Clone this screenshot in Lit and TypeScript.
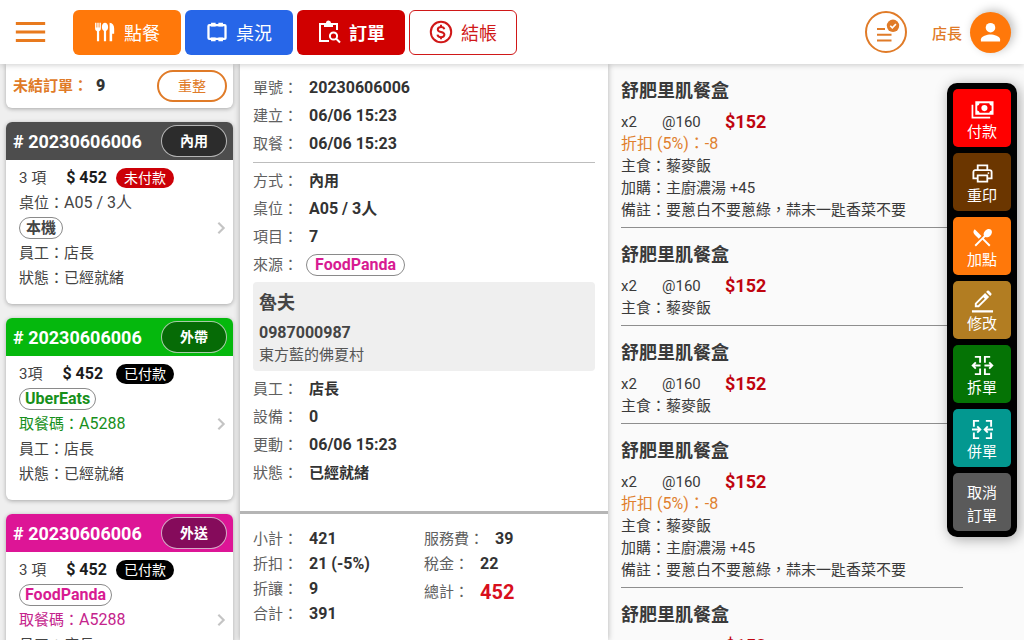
import { LitElement, html, css, svg, nothing } from "lit";
import { customElement, property } from "lit/decorators.js";

const line = (d: string, width = 2) =>
  svg`<path d=${d} fill="none" stroke="currentColor" stroke-width=${width} />`;

const icons: Record<string, unknown> = {
  menu: svg`<path d="M-4 2.700h32M-4 12h32M-4 21.300h32" fill="none" stroke="currentColor" stroke-width="3.300"/>`,
  utensils: svg`<g fill="currentColor"><path d="M1.2 2h1.5v5h.9V2h1.5v5H6V2h1.500v6.200c0 1.600-.8 2.600-1.900 3V22H3.200V11.200C2 10.800 1.200 9.800 1.200 8.200z"/><path d="M12 2c2 0 3.400 1.900 3.400 4.500 0 2.100-.8 3.700-2.200 4.300V22h-2.400V10.800C9.400 10.200 8.600 8.600 8.600 6.500 8.600 3.900 10 2 12 2z"/><path d="M17 2c3.200.2 5 2.600 5 6.500V14h-2.200v8H17z"/></g>`,
  table: svg`<rect x="2.700" y="4.500" width="18.600" height="15" rx="1" fill="none" stroke="currentColor" stroke-width="2.500"/><path d="M5.500 1.800h5V6h-5zM13.500 1.800h5V6h-5zM5.500 18h5v4.200h-5zM13.500 18h5v4.200h-5z" fill="currentColor"/>`,
  clipboard: svg`${line("M8 4H3v17h9M14 4h6v6")}<path d="M7 7V3h2a2.500 2.500 0 0 1 5 0h2v4z" fill="currentColor"/><circle cx="16.500" cy="16" r="3.600" fill="none" stroke="currentColor" stroke-width="2"/>${line("M19 18.500l4 4")}`,
  dollar: svg`<circle cx="12" cy="12" r="10.200" fill="none" stroke="currentColor" stroke-width="2"/>${line("M15.300 9.200C15 7.700 13.800 6.900 12 6.900c-2 0-3.200 1-3.200 2.500 0 3.600 6.600 1.600 6.600 5.200 0 1.600-1.400 2.600-3.400 2.600-2 0-3.300-.9-3.500-2.600M12 4.800v2.500M12 16.800v2.500", 2)}`,
  tasks: svg`${line("M3 9h8M3 14.800h14.500M3 20.600h14.500", 2)}<circle cx="19" cy="5.800" r="6.200" fill="currentColor"/><path d="M16.300 5.800l2 2 3.600-3.700" fill="none" stroke="#fff" stroke-width="1.600"/>`,
  person: svg`<g fill="currentColor"><circle cx="12" cy="7" r="5"/><path d="M2 21.500v-2.500c0-3.300 6.600-5 10-5s10 1.700 10 5v2.500z"/></g>`,
  cash: svg`<path fill="currentColor" fill-rule="evenodd" d="M4.500 3.500h19v14h-19zM9 5.500a3 3 0 0 1-2.500 2.500v5A3 3 0 0 1 9 15.500h10a3 3 0 0 1 2.500-2.500V8A3 3 0 0 1 19 5.500z"/><circle cx="14" cy="10.500" r="3.200" fill="currentColor"/>${line("M1.500 7v13.500H20", 1.800)}`,
  printer: svg`${line("M7 8V3.500h10V8M7 17H2.500v-6.500A2 2 0 0 1 4.500 8.500h15a2 2 0 0 1 2 2V17H17M7 14h10v6.500H7z", 1.900)}<circle cx="18.200" cy="11.600" r="1" fill="currentColor"/>`,
  cutlery: svg`<path fill="currentColor" d="M8.100 13.340l2.830-2.830L3.910 3.500a4.008 4.008 0 0 0 0 5.660l4.190 4.180zm6.780-1.810c1.530.71 3.680.21 5.270-1.380 1.910-1.910 2.280-4.650.81-6.120-1.460-1.460-4.200-1.100-6.120.81-1.590 1.590-2.090 3.740-1.380 5.270L3.700 19.870l1.410 1.410L12 14.410l6.880 6.880 1.410-1.410L13.410 13l1.470-1.470z"/>`,
  pencil: svg`${line("M1 22.300h22", 2.400)}<path fill="currentColor" fill-rule="evenodd" d="M4 18v-4.200L14.700 3.100l4.200 4.200L8.200 18zM6 16h1.400l7-7L13 7.600l-7 7zM15.800 2l1.100-1.100a1.200 1.200 0 0 1 1.700 0L21.100 3.400a1.200 1.200 0 0 1 0 1.700L20 6.200z"/>`,
  split: svg`${line("M4 3h5.500v6M9.500 15v6H4M20 3h-5.500v6M14.500 15v6H20M10 12H2M22 12h-8M5 8.800L1.800 12 5 15.200M19 8.800l3.200 3.200-3.200 3.200")}`,
  merge: svg`${line("M8.500 3H3v6M3 15v6h5.500M15.500 3H21v6M21 15v6h-5.500M1 12h8M23 12h-8M6.500 8.800L9.700 12l-3.200 3.200M17.500 8.800L14.300 12l3.200 3.200")}`,
  chevron: svg`${line("M8 4l8 8L8 20", 3.200)}`,
};

const glyph = (name: string) =>
  html`<svg class="icon ${name}" viewBox="0 0 24 24" aria-hidden="true">${icons[name]}</svg>`;

const shared = css`
  * {
    box-sizing: border-box;
    margin: 0;
  }
  button {
    font: inherit;
    color: inherit;
    border: 0;
    padding: 0;
    cursor: pointer;
  }
  svg {
    display: block;
    flex: none;
    overflow: visible;
  }
  .tag {
    display: inline-flex;
    align-items: center;
    height: 22px;
    padding: 0 5px;
    border: 1px solid #8a8a8a;
    border-radius: 11px;
    background: #fff;
    font-size: 16px;
    line-height: 20px;
    font-weight: 700;
  }
  .panda {
    color: #d81b92;
  }
  .uber {
    color: #17901b;
  }
`;

@customElement("top-bar")
class TopBar extends LitElement {
  static styles = [
    shared,
    css`
      :host {
        display: flex;
        align-items: center;
        height: 64px;
        padding: 0 13px 0 16px;
        background: #fff;
        box-shadow: 0 1px 6px rgba(0, 0, 0, 0.2);
        z-index: 2;
      }
      .toggle {
        background: none;
        color: #e87a1e;
        margin-right: 28px;
      }
      .toggle .icon {
        width: 29px;
        height: 22px;
      }
      nav {
        display: flex;
        gap: 4px;
        flex: 1;
      }
      .tab {
        display: flex;
        align-items: center;
        justify-content: center;
        gap: 8px;
        width: 108px;
        height: 45px;
        border-radius: 6px;
        font-size: 18px;
        color: #fff;
      }
      .tab .icon {
        width: 24px;
        height: 24px;
      }
      .tab .utensils,
      .tab .table {
        width: 22px;
        height: 22px;
      }
      .order {
        background: #ff780a;
      }
      .tables {
        background: #2766e8;
      }
      .orders {
        background: #d00000;
        font-weight: 700;
      }
      .checkout {
        background: #fff;
        color: #d01818;
        border: 1px solid #d01818;
      }
      .tasks-button {
        display: grid;
        place-items: center;
        width: 42px;
        height: 42px;
        border: 2px solid #e07b28;
        border-radius: 50%;
        background: #fff;
        color: #e07b28;
        margin-right: 25px;
      }
      .tasks-button .icon {
        width: 24px;
        height: 24px;
      }
      .user {
        display: flex;
        align-items: center;
        gap: 8px;
        background: none;
        color: #e07b28;
        font-size: 15px;
        font-weight: 500;
      }
      .avatar {
        display: grid;
        place-items: center;
        width: 41px;
        height: 41px;
        border-radius: 50%;
        background: #ff780a;
        color: #fff;
        box-shadow: 3px -2px 10px rgba(0, 0, 0, 0.25);
      }
      .avatar .icon {
        width: 23px;
        height: 23px;
      }
    `,
  ];

  render() {
    return html`
      <button class="toggle" aria-label="選單">${glyph("menu")}</button>
      <nav>
        <button class="tab order">${glyph("utensils")}點餐</button>
        <button class="tab tables">${glyph("table")}桌況</button>
        <button class="tab orders">${glyph("clipboard")}訂單</button>
        <button class="tab checkout">${glyph("dollar")}結帳</button>
      </nav>
      <button class="tasks-button" aria-label="待辦">${glyph("tasks")}</button>
      <button class="user">店長<span class="avatar">${glyph("person")}</span></button>
    `;
  }
}

interface Order {
  kind: string;
  mode: string;
  count: string;
  paid: boolean;
  source: string;
  sourceClass: string;
  table?: string;
  code?: string;
}

const orders: Order[] = [
  { kind: "dine", mode: "內用", count: "3 項", paid: false, source: "本機", sourceClass: "local", table: "A05 / 3人" },
  { kind: "takeout", mode: "外帶", count: "3項", paid: true, source: "UberEats", sourceClass: "uber", code: "A5288" },
  { kind: "delivery", mode: "外送", count: "3 項", paid: true, source: "FoodPanda", sourceClass: "panda", code: "A5288" },
];

@customElement("order-card")
class OrderCard extends LitElement {
  @property({ attribute: false }) order!: Order;

  static styles = [
    shared,
    css`
      :host {
        display: block;
        flex: none;
        border-radius: 6px;
        overflow: hidden;
        background: #fff;
        box-shadow: 0 1px 4px rgba(0, 0, 0, 0.3);
      }
      header {
        display: flex;
        align-items: center;
        justify-content: space-between;
        height: 38px;
        padding: 0 6px 0 7px;
        color: #fff;
      }
      h2 {
        font-size: 18px;
        font-weight: 700;
      }
      .mode {
        display: grid;
        place-items: center;
        width: 66px;
        height: 32px;
        border: 1px solid rgba(255, 255, 255, 0.65);
        border-radius: 16px;
        font-size: 14px;
        line-height: 20px;
        font-weight: 700;
      }
      .dine header {
        background: #4d4d4d;
      }
      .dine .mode {
        background: #2c2c2c;
      }
      .takeout header {
        background: #05b80d;
      }
      .takeout .mode {
        background: #066b06;
      }
      .delivery header {
        background: #dd1596;
      }
      .delivery .mode {
        background: #850b5b;
      }
      .body {
        display: flex;
        align-items: center;
        padding: 5px 4px 14px 13px;
      }
      ul {
        flex: 1;
        padding: 0;
        list-style: none;
      }
      li {
        display: flex;
        align-items: center;
        height: 25px;
        line-height: 20px;
      }
      .sum {
        display: flex;
        align-items: baseline;
        gap: 20px;
        min-width: 97px;
      }
      .sum strong,
      .value {
        font-size: 16px;
      }
      .sum strong {
        color: #1c1c1c;
      }
      .pay {
        height: 20px;
        padding: 0 8px;
        border-radius: 10px;
        font-size: 14px;
        color: #fff;
        background: #cc0008;
      }
      .pay.done {
        background: #000;
      }
      .local {
        font-size: 15px;
        padding: 0 6px;
      }
      .chevron {
        width: 16px;
        height: 16px;
        color: #c4c4c4;
      }
      .tint-uber {
        color: #17901b;
      }
      .tint-panda {
        color: #c4248c;
      }
    `,
  ];

  render() {
    const o = this.order;
    return html`
      <article class=${o.kind}>
        <header>
          <h2># 20230606006</h2>
          <span class="mode">${o.mode}</span>
        </header>
        <div class="body">
          <ul>
            <li>
              <span class="sum"><span>${o.count}</span><strong>$ 452</strong></span>
              <span class="pay ${o.paid ? "done" : ""}">${o.paid ? "已付款" : "未付款"}</span>
            </li>
            ${o.table
              ? html`<li><span>桌位：<span class="value">${o.table}</span></span></li>`
              : nothing}
            <li><span class="tag ${o.sourceClass}">${o.source}</span></li>
            ${o.code
              ? html`<li class="tint-${o.sourceClass}">
                  <span>取餐碼：<span class="value">${o.code}</span></span>
                </li>`
              : nothing}
            <li>員工：店長</li>
            <li>狀態：已經就緒</li>
          </ul>
          ${glyph("chevron")}
        </div>
      </article>
    `;
  }
}

@customElement("order-detail")
class OrderDetail extends LitElement {
  static styles = [
    shared,
    css`
      :host {
        display: flex;
        flex-direction: column;
        background: #fff;
        box-shadow: 0 0 6px rgba(0, 0, 0, 0.3);
        z-index: 1;
      }
      .info {
        flex: none;
        height: 447px;
        padding: 10px 13px 0;
      }
      dl > div {
        display: flex;
        align-items: center;
        gap: 11px;
        height: 28px;
        line-height: 20px;
      }
      dt {
        color: #606060;
      }
      dd {
        color: #333;
        font-size: 16px;
        font-weight: 700;
      }
      dd.text {
        font-size: 15px;
      }
      .ruled {
        border-bottom: 1px solid #bdbdbd;
        padding-bottom: 4px;
        margin-bottom: 4px;
      }
      dd .tag {
        padding: 0 8px;
        margin-left: -3px;
      }
      .customer {
        padding: 6px 6px 7px;
        margin: 3px 0 4px;
        border-radius: 4px;
        background: #efefef;
        color: #444;
      }
      .customer h3 {
        font-size: 18px;
        line-height: 30px;
        margin-bottom: 2px;
      }
      .phone {
        font-size: 16px;
        font-weight: 700;
        line-height: 26px;
      }
      .address {
        line-height: 18px;
        color: #555;
      }
      .totals {
        flex: 1;
        display: grid;
        grid-template-columns: 1fr 1fr;
        padding: 12px 13px;
        border-top: 3px solid #b5b5b5;
      }
      .totals dl > div {
        height: 25px;
      }
      .totals .grand {
        height: 32px;
      }
      .grand dd {
        font-size: 20px;
        color: #d80f1c;
      }
    `,
  ];

  private row(label: string, value: unknown, cls = "", rowCls = "") {
    return html`<div class=${rowCls}><dt>${label}：</dt><dd class=${cls}>${value}</dd></div>`;
  }

  render() {
    return html`
      <section class="info">
        <dl class="ruled">
          ${this.row("單號", "20230606006")} ${this.row("建立", "06/06 15:23")}
          ${this.row("取餐", "06/06 15:23")}
        </dl>
        <dl>
          ${this.row("方式", "內用", "text")} ${this.row("桌位", "A05 / 3人")}
          ${this.row("項目", "7")}
          ${this.row("來源", html`<span class="tag panda">FoodPanda</span>`)}
        </dl>
        <div class="customer">
          <h3>魯夫</h3>
          <p class="phone">0987000987</p>
          <p class="address">東方藍的佛夏村</p>
        </div>
        <dl>
          ${this.row("員工", "店長", "text")} ${this.row("設備", "0")}
          ${this.row("更動", "06/06 15:23")} ${this.row("狀態", "已經就緒", "text")}
        </dl>
      </section>
      <section class="totals">
        <dl>
          ${this.row("小計", "421")} ${this.row("折扣", "21 (-5%)")}
          ${this.row("折讓", "9")} ${this.row("合計", "391")}
        </dl>
        <dl>
          ${this.row("服務費", "39")} ${this.row("稅金", "22")}
          ${this.row("總計", "452", "", "grand")}
        </dl>
      </section>
    `;
  }
}

@customElement("item-list")
class ItemList extends LitElement {
  static styles = [
    shared,
    css`
      :host {
        display: block;
        overflow: hidden;
        padding: 0 61px 0 13px;
        background: #fafafa;
        color: #3a3a3a;
      }
      article {
        padding: 13px 0 6px;
        border-bottom: 1px solid #8e8e8e;
        white-space: nowrap;
      }
      h3 {
        font-size: 18px;
        line-height: 28px;
        margin-bottom: 5px;
      }
      .price {
        display: grid;
        grid-template-columns: 41px 63px 1fr;
        align-items: center;
        height: 23px;
      }
      .price strong {
        font-size: 18px;
        color: #c0050f;
      }
      p {
        line-height: 22px;
      }
      .discount {
        font-size: 16px;
        color: #e0812f;
      }
    `,
  ];

  private item(full: boolean) {
    return html`
      <article>
        <h3>舒肥里肌餐盒</h3>
        <div class="price"><span>x2</span><span>@160</span><strong>$152</strong></div>
        ${full ? html`<p class="discount">折扣 (5%)：-8</p>` : nothing}
        <p>主食：藜麥飯</p>
        ${full
          ? html`<p>加購：主廚濃湯 +45</p>
              <p>備註：要蔥白不要蔥綠，蒜末一匙香菜不要</p>`
          : nothing}
      </article>
    `;
  }

  render() {
    return [true, false, false, true, false].map((full) => this.item(full));
  }
}

@customElement("action-bar")
class ActionBar extends LitElement {
  static styles = [
    shared,
    css`
      :host {
        display: flex;
        flex-direction: column;
        gap: 6px;
        padding: 6px;
        border-radius: 10px;
        background: #000;
        box-shadow: 2px 2px 14px rgba(0, 0, 0, 0.35);
      }
      button {
        display: flex;
        flex-direction: column;
        align-items: center;
        justify-content: center;
        gap: 1px;
        width: 58px;
        height: 58px;
        padding-top: 4px;
        border-radius: 5px;
        color: #fff;
        font-size: 15px;
        line-height: 20px;
      }
      .icon {
        width: 23px;
        height: 23px;
      }
      .pay {
        background: #ff0000;
      }
      .print {
        background: #6b3600;
      }
      .add {
        background: #ff780a;
      }
      .edit {
        background: #b27d22;
      }
      .divide {
        background: #057305;
      }
      .join {
        background: #039890;
      }
      .cancel {
        background: #5a5a5a;
        line-height: 22px;
      }
    `,
  ];

  render() {
    return html`
      <button class="pay">${glyph("cash")}付款</button>
      <button class="print">${glyph("printer")}重印</button>
      <button class="add">${glyph("cutlery")}加點</button>
      <button class="edit">${glyph("pencil")}修改</button>
      <button class="divide">${glyph("split")}拆單</button>
      <button class="join">${glyph("merge")}併單</button>
      <button class="cancel"><span>取消</span><span>訂單</span></button>
    `;
  }
}

@customElement("app-root")
class AppRoot extends LitElement {
  static styles = [
    shared,
    css`
      :host {
        display: flex;
        flex-direction: column;
        height: 100vh;
        overflow: hidden;
        position: relative;
        font-family: Roboto, "Noto Sans CJK TC", sans-serif;
        font-size: 15px;
        color: #444;
      }
      main {
        flex: 1;
        min-height: 0;
        display: grid;
        grid-template-columns: 240px minmax(0, 23fr) minmax(0, 26fr);
        grid-template-rows: minmax(0, 1fr);
      }
      aside {
        display: flex;
        flex-direction: column;
        gap: 14px;
        padding: 0 7px 0 6px;
        overflow: hidden;
        background: #efefef;
      }
      .summary {
        flex: none;
        display: flex;
        align-items: center;
        justify-content: space-between;
        padding: 6px 6px 6px 7px;
        border-radius: 0 0 6px 6px;
        background: #fff;
        box-shadow: 0 1px 4px rgba(0, 0, 0, 0.3);
        line-height: 20px;
        font-weight: 700;
        color: #e07b28;
      }
      .summary strong {
        margin-left: 8px;
        font-size: 16px;
        color: #333;
      }
      .refresh {
        width: 70px;
        height: 32px;
        border: 2px solid #e07b28;
        border-radius: 16px;
        background: #fff;
        color: #e07b28;
        font-size: 14px;
        font-weight: 400;
      }
      .floating {
        position: absolute;
        top: 83px;
        right: 7px;
        z-index: 3;
      }
    `,
  ];

  render() {
    return html`
      <top-bar></top-bar>
      <main>
        <aside>
          <div class="summary">
            <span>未結訂單：<strong>9</strong></span>
            <button class="refresh">重整</button>
          </div>
          ${orders.map((o) => html`<order-card .order=${o}></order-card>`)}
        </aside>
        <order-detail></order-detail>
        <item-list></item-list>
      </main>
      <action-bar class="floating"></action-bar>
    `;
  }
}
